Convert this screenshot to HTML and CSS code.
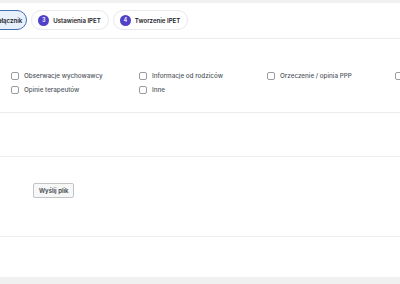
FILE: index.html
```html
<!DOCTYPE html>
<html lang="pl">
<head>
  <meta charset="UTF-8" />
  <meta name="viewport" content="width=device-width, initial-scale=1.0" />
  <title>IPET</title>
  <link rel="stylesheet" href="styles.css">
</head>
<body>
  <div class="topbar"></div>

  <div class="tabs">
    <div class="tab active">
      <span class="num">2</span>
      Załącznik
    </div>
    <div class="tab">
      <span class="num">3</span>
      Ustawienia IPET
    </div>
    <div class="tab">
      <span class="num">4</span>
      Tworzenie IPET
    </div>
  </div>

  <div class="section sources">
    <div class="checks">
      <label class="check"><span class="box"></span>Obserwacje wychowawcy</label>
      <label class="check"><span class="box"></span>Informacje od rodziców</label>
      <label class="check"><span class="box"></span>Orzeczenie / opinia PPP</label>
      <label class="check"><span class="box"></span></label>
      <label class="check"><span class="box"></span>Opinie terapeutów</label>
      <label class="check"><span class="box"></span>Inne</label>
    </div>
  </div>

  <div class="section empty"></div>

  <div class="section upload">
    <button class="btn">Wyślij plik</button>
  </div>

  <div class="section last"></div>

  <div class="footer"></div>
</body>
</html>
```

FILE: styles.css
```css
body {
  margin: 0;
  background: #fff;
  font-family: Inter, "Noto Sans", sans-serif;
  color: #1d2327;
  overflow: hidden;
}

.topbar {
  height: 3px;
  background: #f0f0f1;
}

.tabs {
  display: flex;
  gap: 4px;
  height: 36px;
  padding-top: 7px;
  box-sizing: border-box;
  margin-left: -28px;
  border-bottom: 1px solid #ececf1;
}

.tab {
  display: flex;
  align-items: center;
  gap: 4px;
  height: 20px;
  padding: 0 7px 0 6px;
  box-sizing: border-box;
  border: 1px solid #e8e8ee;
  border-radius: 11px;
  font-size: 6.1px;
  font-weight: 600;
  white-space: nowrap;
}

.tab.active {
  background: #e8f0fb;
  border-color: #3f6fb8;
  border-width: 1.5px;
  padding-right: 4px;
}

.num {
  width: 11px;
  height: 11px;
  border-radius: 50%;
  background: #5140c8;
  color: #fff;
  font-size: 5.5px;
  display: flex;
  align-items: center;
  justify-content: center;
}

.section {
  border-bottom: 1px solid #ececf1;
  box-sizing: border-box;
}

.sources {
  height: 74px;
  padding: 33px 0 0 11px;
}

.checks {
  display: grid;
  grid-template-columns: repeat(4, 128px);
  row-gap: 6px;
}

.check {
  display: flex;
  align-items: center;
  gap: 5px;
  height: 8px;
  font-size: 6.3px;
  font-weight: 500;
  color: #50575e;
  white-space: nowrap;
}

.box {
  width: 6px;
  height: 6px;
  border: 1px solid #9a9ca1;
  border-radius: 2px;
  flex-shrink: 0;
}

.empty {
  height: 44px;
}

.upload {
  display: flex;
  align-items: flex-start;
  height: 80px;
  padding: 26px 0 0 33px;
}

.btn {
  height: 15px;
  padding: 0 5px;
  font-family: inherit;
  font-size: 6px;
  font-weight: 600;
  color: #3c434a;
  background: #f6f7f7;
  border: 1px solid #c3c4c7;
  border-radius: 2px;
}

.last {
  height: 40px;
  border-bottom: none;
}

.footer {
  height: 8px;
  background: #f0f0f1;
}
```
